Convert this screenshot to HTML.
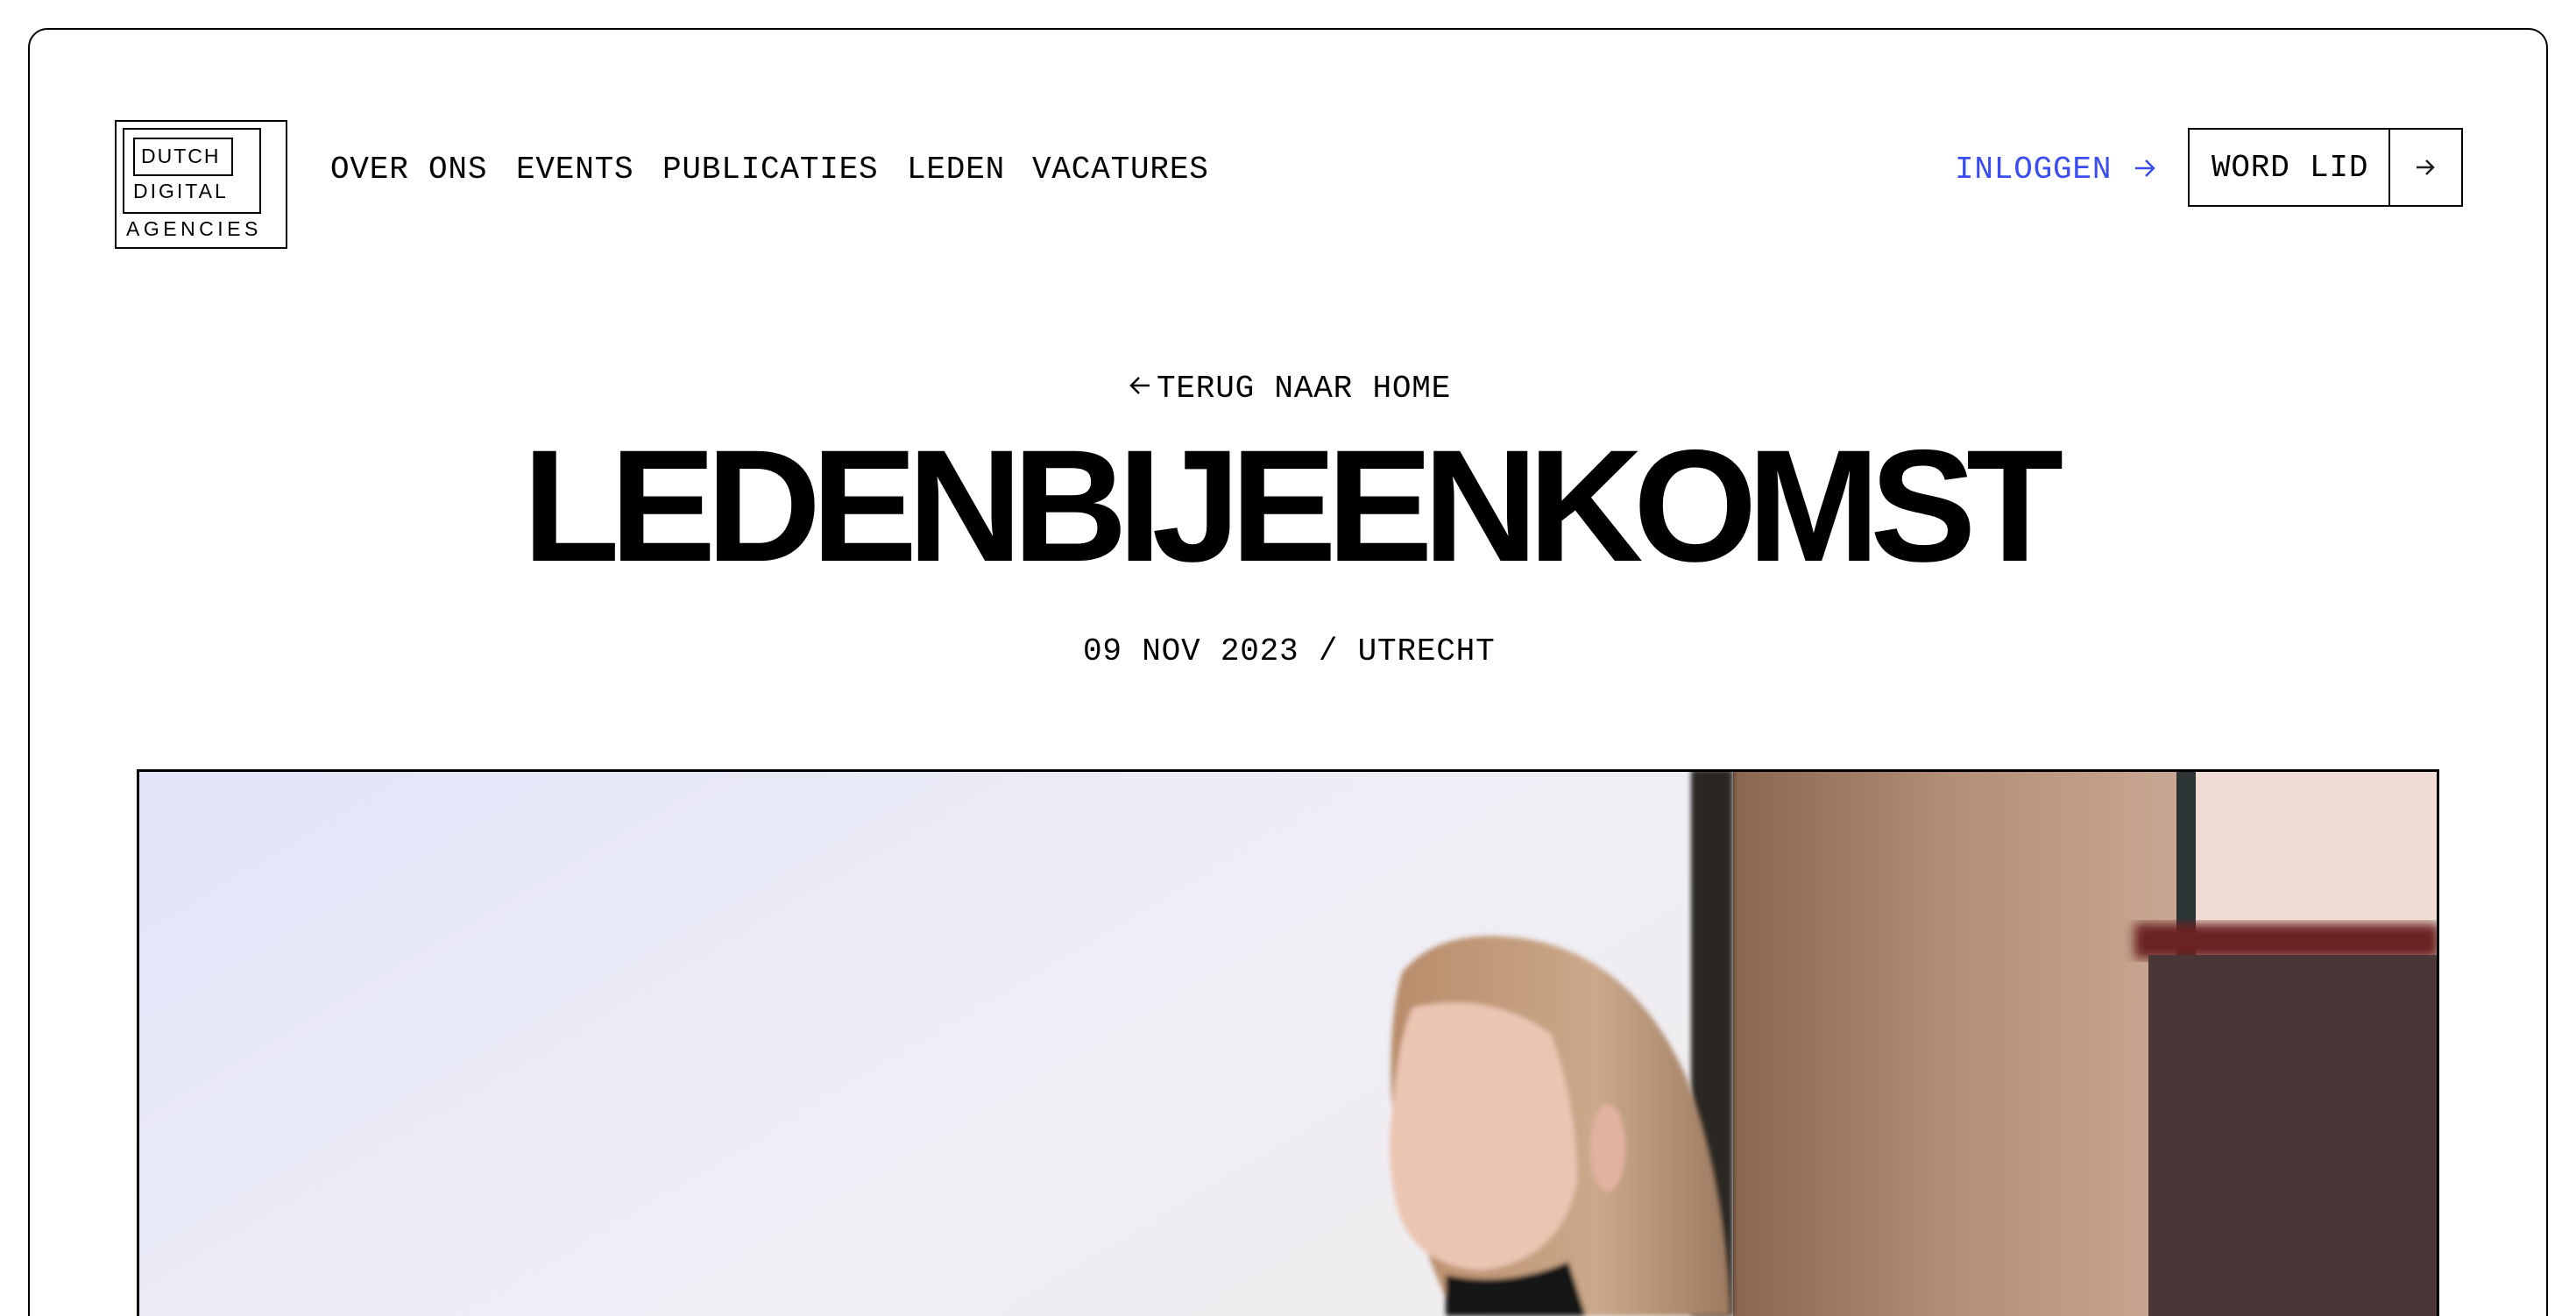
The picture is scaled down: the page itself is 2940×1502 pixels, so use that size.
<!DOCTYPE html>
<html><head><meta charset="utf-8">
<style>
html,body{margin:0;padding:0;background:#fff;width:2940px;height:1502px;overflow:hidden}
#wrap{position:relative;width:2940px;height:1502px;overflow:hidden;background:#fff}
.frame{position:absolute;left:32px;top:32px;width:2872px;height:1520px;border:2px solid #000;border-radius:22px;background:#fff}
.m{font-family:"Liberation Mono",monospace;font-size:36px;letter-spacing:0.8px;color:#000;position:absolute;white-space:nowrap;line-height:1}
.nav{top:176px}
.logo{position:absolute;left:131px;top:137px;width:193px;height:143px;border:2px solid #000}
.lt{position:absolute;font-family:"Liberation Sans",sans-serif;font-size:23px;letter-spacing:2px;color:#000;line-height:1}
h1{position:absolute;left:0;width:2940px;top:486px;margin:0;text-align:center;font-family:"Liberation Sans",sans-serif;font-weight:bold;font-size:182px;letter-spacing:-11.5px;line-height:1;color:#000}
</style></head><body><div id="wrap">
<div class="frame"></div>
<div class="logo"></div>
<div style="position:absolute;left:140px;top:146px;width:154px;height:94px;border:2px solid #000"></div>
<div style="position:absolute;left:152px;top:157px;width:110px;height:40px;border:2px solid #000"></div>
<div class="lt" style="left:161px;top:167px">DUTCH</div>
<div class="lt" style="left:152px;top:207px;letter-spacing:3px">DIGITAL</div>
<div class="lt" style="left:144px;top:250px;letter-spacing:4.5px">AGENCIES</div>

<div class="m nav" style="left:377px">OVER ONS</div>
<div class="m nav" style="left:589px">EVENTS</div>
<div class="m nav" style="left:756px">PUBLICATIES</div>
<div class="m nav" style="left:1035px">LEDEN</div>
<div class="m nav" style="left:1178px">VACATURES</div>

<div class="m nav" style="left:2231px;color:#3b4cf0">INLOGGEN</div>
<svg style="position:absolute;left:2435px;top:180px" width="26" height="24" viewBox="0 0 26 24"><path d="M2 12H23M14 3l9 9-9 9" fill="none" stroke="#3b4cf0" stroke-width="2.5"/></svg>
<div style="position:absolute;left:2497px;top:146px;width:310px;height:86px;border:2px solid #000"></div>
<div style="position:absolute;left:2726px;top:146px;width:2px;height:90px;background:#000"></div>
<div class="m" style="left:2524px;top:174px">WORD LID</div>
<svg style="position:absolute;left:2756px;top:180px" width="24" height="22" viewBox="0 0 24 22"><path d="M2 11H21M13 3l8 8-8 8" fill="none" stroke="#222" stroke-width="2.5"/></svg>

<svg style="position:absolute;left:1288px;top:428px" width="26" height="24" viewBox="0 0 26 24"><path d="M24 12H3M12 3l-9 9 9 9" fill="none" stroke="#000" stroke-width="2.5"/></svg>
<div class="m" style="left:1320px;top:426px">TERUG NAAR HOME</div>
<h1>LEDENBIJEENKOMST</h1>
<div class="m" style="left:1236px;top:726px">09 NOV 2023 / UTRECHT</div>

<svg style="position:absolute;left:156px;top:878px" width="2628" height="624" viewBox="156 878 2628 624">
<defs>
<linearGradient id="bg" x1="0" x2="1" y1="0" y2="0.4"><stop offset="0" stop-color="#e2e4f8"/><stop offset="0.5" stop-color="#eeeef6"/><stop offset="1" stop-color="#f1ecec"/></linearGradient>
<linearGradient id="br" x1="0" x2="1"><stop offset="0" stop-color="#8a6650"/><stop offset="0.5" stop-color="#b48e76"/><stop offset="1" stop-color="#c8a792"/></linearGradient>
<linearGradient id="hair" x1="0" x2="1"><stop offset="0" stop-color="#b88c6a"/><stop offset="0.6" stop-color="#caa88a"/><stop offset="1" stop-color="#9c7a60"/></linearGradient>
<filter id="bl"><feGaussianBlur stdDeviation="6"/></filter>
<filter id="bl2"><feGaussianBlur stdDeviation="3"/></filter>
</defs>
<rect x="156" y="878" width="2628" height="624" fill="url(#bg)"/>
<rect x="1978" y="878" width="506" height="624" fill="url(#br)"/>
<rect x="1930" y="878" width="48" height="624" fill="#2a2624" filter="url(#bl2)"/>
<rect x="2484" y="878" width="22" height="624" fill="#2c3434"/>
<rect x="2506" y="878" width="278" height="624" fill="#efdcd4"/>
<rect x="2436" y="1054" width="348" height="40" fill="#6a2424" filter="url(#bl)"/>
<rect x="2452" y="1090" width="332" height="412" fill="#4a3636"/>
<g filter="url(#bl2)">
<path d="M1600 1110 Q1640 1060 1730 1070 Q1860 1085 1925 1230 Q1970 1350 1975 1502 L1660 1502 Q1600 1380 1588 1250 Q1585 1160 1600 1110 Z" fill="url(#hair)"/>
<path d="M1612 1150 Q1700 1130 1770 1180 Q1800 1260 1800 1350 Q1780 1440 1690 1450 Q1615 1445 1595 1380 Q1580 1320 1590 1260 Q1595 1190 1612 1150 Z" fill="#ebc4b2"/>
<ellipse cx="1835" cy="1310" rx="20" ry="50" fill="#e2b29f"/>
<path d="M1650 1455 Q1720 1470 1790 1440 L1810 1502 L1650 1502 Z" fill="#161616"/>
</g>
<rect x="157.5" y="879.5" width="2625" height="640" fill="none" stroke="#000" stroke-width="3"/>
</svg>
</div></body></html>
